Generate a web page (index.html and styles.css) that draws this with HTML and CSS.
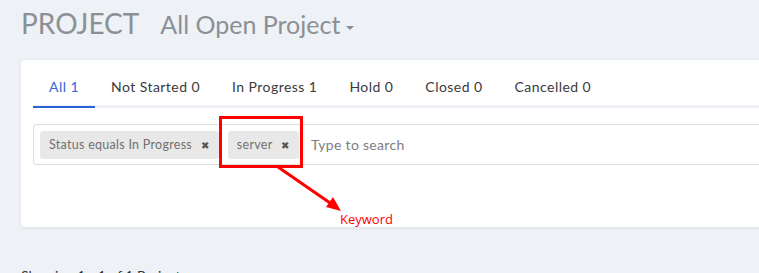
FILE: index.html
```html
<!DOCTYPE html>
<html lang="en">
  <head>
    <meta charset="UTF-8" />
    <meta name="viewport" content="width=device-width, initial-scale=1.0" />
    <title>Projects</title>
    <link rel="stylesheet" href="styles.css">
  </head>
  <body>
    <div class="page-head">
      <span class="page-title">PROJECT</span>
      <span class="view-select">All Open Project <span class="caret"></span></span>
    </div>

    <div class="card">
      <ul class="tabs">
        <li class="tab active">All 1</li>
        <li class="tab">Not Started 0</li>
        <li class="tab">In Progress 1</li>
        <li class="tab">Hold 0</li>
        <li class="tab">Closed 0</li>
        <li class="tab">Cancelled 0</li>
      </ul>

      <div class="search-box">
        <span class="chip">Status equals In Progress <span class="chip-x">&#10006;</span></span>
        <span class="chip">server <span class="chip-x">&#10006;</span></span>
        <input type="text" class="search-input" placeholder="Type to search" />
      </div>

      <!-- annotation -->
      <div class="note-box"></div>
      <svg class="note-arrow" width="80" height="50" viewBox="0 0 80 50">
        <line x1="3" y1="2" x2="58" y2="40" stroke="#f00" stroke-width="3" />
        <polygon points="66,46 51,42 58,32" fill="#f00" />
      </svg>
      <span class="note-text">Keyword</span>
    </div>

    <p class="showing">Showing 1 - 1 of 1 Projects</p>
  </body>
</html>
```

FILE: styles.css
```css
body {
  margin: 0;
  padding: 0 0 0 21px;
  background-color: #eef2f6;
  font-family: Lato, "Noto Sans", sans-serif;
  color: #333;
  overflow: hidden;
}

.page-head {
  height: 60px;
  display: flex;
  align-items: baseline;
  gap: 21px;
  color: #8b9095;
}

.page-title {
  font-size: 28px;
  line-height: 46px;
}

.view-select {
  font-size: 25px;
}

.caret {
  display: inline-block;
  width: 0;
  height: 0;
  margin-left: -1px;
  vertical-align: middle;
  border-left: 4px solid transparent;
  border-right: 4px solid transparent;
  border-top: 4px solid #8b9095;
}

.card {
  position: relative;
  width: 800px;
  height: 167px;
  box-sizing: border-box;
  padding: 12px 12px 0;
  background-color: #fff;
  border-radius: 4px;
  box-shadow: 0 1px 4px rgba(0, 0, 0, 0.08);
}

.tabs {
  display: flex;
  margin: 0;
  padding: 0;
  list-style: none;
  border-bottom: 3px solid #eef2f6;
}

.tab {
  height: 34px;
  line-height: 30px;
  padding: 0 16px;
  margin-bottom: -3px;
  font-size: 14px;
  letter-spacing: 0.45px;
  color: #3a3a3a;
  border-bottom: 2px solid transparent;
}

.tab.active {
  color: #3566d6;
  border-bottom-color: #2a62d8;
}

.search-box {
  display: flex;
  align-items: center;
  gap: 9px;
  height: 41px;
  margin-top: 16px;
  padding: 0 6px;
  box-sizing: border-box;
  border: 1px solid #ddd;
  border-radius: 3px;
}

.chip {
  height: 28px;
  line-height: 28px;
  padding: 0 10px 0 9px;
  background-color: #e8e8e8;
  border-radius: 3px;
  font-size: 12.5px;
  letter-spacing: 0.28px;
  color: #707070;
  white-space: nowrap;
}

.chip-x {
  margin-left: 5px;
  font-size: 10px;
  color: #555;
}

.search-input {
  flex: 1;
  border: none;
  outline: none;
  padding: 0 0 0 3px;
  font-family: inherit;
  font-size: 14px;
  letter-spacing: 0.3px;
}

.search-input::placeholder {
  color: #7d7d7d;
}

.note-box {
  position: absolute;
  left: 198px;
  top: 56px;
  width: 78px;
  height: 46px;
  border: 3px solid #f00;
}

.note-arrow {
  position: absolute;
  left: 254px;
  top: 105px;
}

.note-text {
  position: absolute;
  left: 319px;
  top: 150px;
  font-family: "Open Sans", sans-serif;
  font-size: 13px;
  color: #f00;
}

.showing {
  margin: 40px 0 0;
  font-size: 14px;
  color: #333;
}
```
